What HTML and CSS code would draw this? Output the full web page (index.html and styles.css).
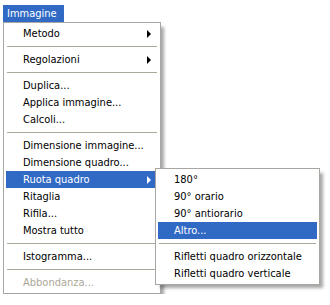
FILE: index.html
```html
<!DOCTYPE html>
<html lang="it">

<head>
  <meta charset="utf-8">
  <title>Immagine</title>
  <link rel="stylesheet" href="styles.css">
</head>

<body>
  <div class="wrap">
    <div class="menu-title">Immagine</div>
    <ul class="menu">
      <li class="item"><span>Metodo</span><i class="arrow"></i></li>
      <li class="sep"></li>
      <li class="item"><span>Regolazioni</span><i class="arrow"></i></li>
      <li class="sep"></li>
      <li class="item">Duplica...</li>
      <li class="item">Applica immagine...</li>
      <li class="item">Calcoli...</li>
      <li class="sep"></li>
      <li class="item">Dimensione immagine...</li>
      <li class="item">Dimensione quadro...</li>
      <li class="item active">
        <span>Ruota quadro</span><i class="arrow"></i>
        <!-- sottomenu -->
        <ul class="menu submenu">
          <li class="item">180°</li>
          <li class="item">90° orario</li>
          <li class="item">90° antiorario</li>
          <li class="item active">Altro...</li>
          <li class="sep"></li>
          <li class="item">Rifletti quadro orizzontale</li>
          <li class="item">Rifletti quadro verticale</li>
        </ul>
      </li>
      <li class="item">Ritaglia</li>
      <li class="item">Rifila...</li>
      <li class="item">Mostra tutto</li>
      <li class="sep"></li>
      <li class="item">Istogramma...</li>
      <li class="sep"></li>
      <li class="item disabled">Abbondanza...</li>
    </ul>
  </div>
</body>

</html>
```

FILE: styles.css
```css
* {
  padding: 0;
  margin: 0;
  box-sizing: border-box;
}

ul {
  list-style: none;
}

body {
  background-color: #fff;
  font-family: "DejaVu Sans Condensed", "DejaVu Sans", sans-serif;
  font-size: 11px;
  color: #000;
}

.wrap {
  padding: 5px 0 0 3px;
}

.menu-title {
  display: inline-block;
  height: 17px;
  line-height: 17px;
  padding: 0 7px 0 4px;
  background-color: #316ac5;
  color: #fff;
}

.menu {
  width: 158px;
  padding: 2px;
  border: 1px solid #a7a6a0;
  background-color: #fff;
  box-shadow: 4px 4px 3px -1px rgba(0, 0, 0, .35);
}

.item {
  height: 17px;
  line-height: 17px;
  padding: 0 7px 0 17px;
  display: flex;
  justify-content: space-between;
  align-items: center;
  position: relative;
}

.item.active {
  background-color: #316ac5;
  color: #fff;
}

.item.disabled {
  color: #aca899;
}

.arrow {
  width: 0;
  height: 0;
  border-top: 4px solid transparent;
  border-bottom: 4px solid transparent;
  border-left: 4px solid #000;
}

.item.active>.arrow {
  border-left-color: #fff;
}

.sep {
  height: 9px;
  display: flex;
  align-items: center;
  padding: 0 1px;
}

.sep::before {
  content: "";
  flex: 1;
  height: 1px;
  background-color: #aca899;
}

/* sottomenu */
.submenu {
  position: absolute;
  left: 149px;
  top: -3px;
  width: 165px;
  color: #000;
  line-height: normal;
}

.submenu .item {
  padding-left: 16px;
}
```
